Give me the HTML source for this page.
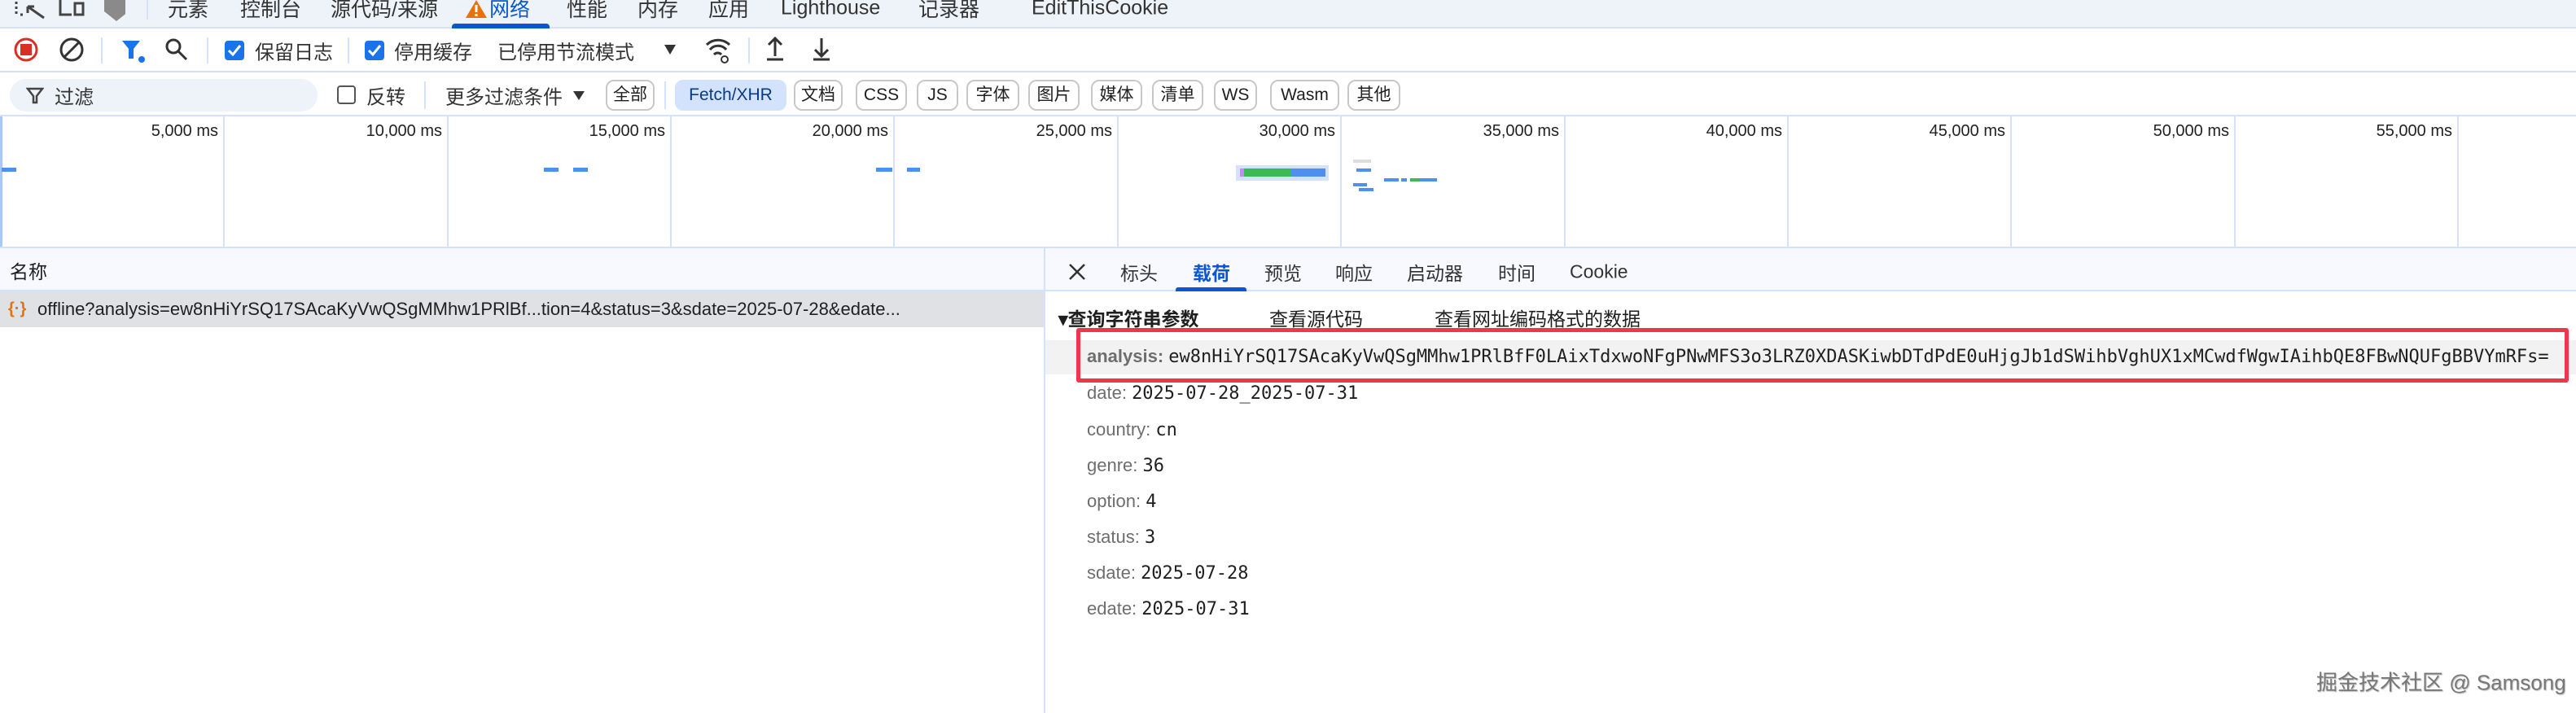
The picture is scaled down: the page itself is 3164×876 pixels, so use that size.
<!DOCTYPE html>
<html><head><meta charset="utf-8">
<style>
*{margin:0;padding:0;box-sizing:border-box}
body{width:3164px;height:876px;overflow:hidden;background:#fff;position:relative;font-family:"Liberation Sans","Noto Sans CJK SC",sans-serif;color:#1f1f1f;font-size:23px}
.a{position:absolute;white-space:nowrap}
.c{transform:translateY(-50%)}
.mono{font-family:"DejaVu Sans Mono","Liberation Mono","Noto Sans CJK SC",monospace}
.btn{position:absolute;top:98px;height:38px;border:2px solid #c8c8c8;border-radius:10px;font-size:21px;line-height:34px;text-align:center;color:#1f1f1f;background:#fff}
.vl{position:absolute;top:143px;height:162px;width:2px;background:#d6e2f7}
.tl{position:absolute;top:150px;font-size:20px;color:#222;text-align:right}
.bar{position:absolute;height:5px;background:#4f8ff0}
.k{color:#6e6e6e}
.row{position:absolute;left:1335px;font-size:22px}
</style></head><body>
<div class="a" style="left:0;top:0;width:3164px;height:35px;background:#eef2f9;border-bottom:2px solid #d3e3fd"></div>
<svg class="a" style="left:14px;top:0" width="140" height="26" viewBox="0 0 140 26">
<path d="M6 2v16M6 18h0M14 18h-4" stroke="#444" stroke-width="3" stroke-dasharray="3 3" fill="none"/>
<path d="M20 8l20 14M20 8v8M20 8h8" stroke="#444" stroke-width="3" fill="none"/>
<path d="M60 0v18h14" stroke="#444" stroke-width="3" fill="none"/><rect x="78" y="4" width="10" height="14" stroke="#444" stroke-width="3" fill="none"/>
<path d="M114 0h30v14l-15 12l-15-12z" fill="#8a8a8a"/>
</svg>
<div class="a" style="left:180px;top:0;width:2px;height:24px;background:#d3e3fd"></div>
<div class="a c" style="left:206px;top:10px;font-size:25px;color:#333">元素</div>
<div class="a c" style="left:295px;top:10px;font-size:25px;color:#333">控制台</div>
<div class="a c" style="left:406px;top:10px;font-size:25px;color:#333">源代码/来源</div>
<svg class="a" style="left:572px;top:0" width="26" height="22"><path d="M13 0L26 22H0z" fill="#e8710a"/><rect x="11.5" y="6" width="3" height="9" fill="#fff"/><rect x="11.5" y="17" width="3" height="3" fill="#fff"/></svg>
<div class="a c" style="left:601px;top:10px;font-size:25px;color:#0b57d0">网络</div>
<div class="a" style="left:555px;top:29px;width:120px;height:6px;background:#0b57d0;border-radius:4px 4px 0 0"></div>
<div class="a c" style="left:696px;top:10px;font-size:25px;color:#333">性能</div>
<div class="a c" style="left:783px;top:10px;font-size:25px;color:#333">内存</div>
<div class="a c" style="left:870px;top:10px;font-size:25px;color:#333">应用</div>
<div class="a c" style="left:959px;top:10px;font-size:25px;color:#333">Lighthouse</div>
<div class="a c" style="left:1128px;top:10px;font-size:25px;color:#333">记录器</div>
<div class="a c" style="left:1267px;top:10px;font-size:25px;color:#333">EditThisCookie</div>

<div class="a" style="left:0;top:87px;width:3164px;height:2px;background:#d3e3fd"></div>
<svg class="a" style="left:0;top:35px" width="1040" height="52">
<circle cx="32" cy="26" r="13" stroke="#d93025" stroke-width="3" fill="none"/><rect x="25" y="19" width="14" height="14" fill="#d93025"/>
<circle cx="88" cy="26" r="13" stroke="#333" stroke-width="3" fill="none"/><path d="M79 35L97 17" stroke="#333" stroke-width="3"/>
<rect x="124" y="11" width="2" height="32" fill="#d3e3fd"/>
<path d="M150 15h22l-8 10v12h-6V25z" fill="#1a73e8"/><circle cx="174" cy="38" r="4" fill="#1a73e8"/>
<circle cx="213" cy="22" r="8" stroke="#333" stroke-width="3" fill="none"/><path d="M219 28l10 10" stroke="#333" stroke-width="3"/>
<rect x="254" y="11" width="2" height="32" fill="#d3e3fd"/>
<rect x="276" y="15" width="24" height="24" rx="4" fill="#1a73e8"/><path d="M281 27l5 5l9-11" stroke="#fff" stroke-width="3" fill="none"/>
<rect x="427" y="11" width="2" height="32" fill="#d3e3fd"/>
<rect x="448" y="15" width="24" height="24" rx="4" fill="#1a73e8"/><path d="M453 27l5 5l9-11" stroke="#fff" stroke-width="3" fill="none"/>
<path d="M816 20h14l-7 12z" fill="#333"/>
<path d="M868 20a20 20 0 0 1 28 0M872 26a13 13 0 0 1 20 0M877 32a6 6 0 0 1 9 0" stroke="#333" stroke-width="3" fill="none"/><circle cx="890" cy="38" r="4" stroke="#333" stroke-width="2" fill="#fff"/>
<rect x="919" y="11" width="2" height="32" fill="#d3e3fd"/>
<path d="M952 12v22M944 20l8-8l8 8M942 38h20" stroke="#333" stroke-width="3" fill="none"/>
<path d="M1009 12v22M1001 26l8 8l8-8M999 38h20" stroke="#333" stroke-width="3" fill="none"/>
</svg>
<div class="a c" style="left:313px;top:62px;font-size:24px;color:#333">保留日志</div>
<div class="a c" style="left:484px;top:62px;font-size:24px;color:#333">停用缓存</div>
<div class="a c" style="left:611px;top:62px;font-size:24px;color:#333">已停用节流模式</div>

<div class="a" style="left:0;top:141px;width:3164px;height:2px;background:#d3e3fd"></div>
<div class="a" style="left:12px;top:97px;width:378px;height:40px;border-radius:20px;background:#eef2f9"></div>
<svg class="a" style="left:32px;top:106px" width="22" height="22"><path d="M2 3h18l-7 9v8h-4v-8z" stroke="#444" stroke-width="2.5" fill="none"/></svg>
<div class="a c" style="left:67px;top:117px;font-size:24px;color:#333">过滤</div>
<div class="a" style="left:414px;top:105px;width:23px;height:23px;border:2px solid #555;border-radius:4px"></div>
<div class="a c" style="left:450px;top:117px;font-size:24px;color:#333">反转</div>
<div class="a" style="left:521px;top:100px;width:2px;height:34px;background:#d3e3fd"></div>
<div class="a c" style="left:547px;top:117px;font-size:24px;color:#333">更多过滤条件</div>
<svg class="a" style="left:704px;top:110px" width="16" height="14"><path d="M0 2h14l-7 11z" fill="#333"/></svg>
<div class="btn" style="left:744px;width:60px">全部</div>
<div class="a" style="left:816px;top:100px;width:2px;height:34px;background:#d3e3fd"></div>
<div class="btn" style="left:829px;width:137px;background:#d3e3fd;border-color:#d3e3fd;color:#0b3a80">Fetch/XHR</div>
<div class="btn" style="left:975px;width:60px">文档</div>
<div class="btn" style="left:1051px;width:63px">CSS</div>
<div class="btn" style="left:1126px;width:51px">JS</div>
<div class="btn" style="left:1187px;width:65px">字体</div>
<div class="btn" style="left:1263px;width:63px">图片</div>
<div class="btn" style="left:1340px;width:63px">媒体</div>
<div class="btn" style="left:1415px;width:63px">清单</div>
<div class="btn" style="left:1491px;width:53px">WS</div>
<div class="btn" style="left:1560px;width:85px">Wasm</div>
<div class="btn" style="left:1655px;width:65px">其他</div>

<div class="a" style="left:0;top:143px;width:3px;height:162px;background:#a8c7fa"></div>
<div class="vl" style="left:274px"></div><div class="vl" style="left:549px"></div><div class="vl" style="left:823px"></div><div class="vl" style="left:1097px"></div><div class="vl" style="left:1372px"></div><div class="vl" style="left:1646px"></div><div class="vl" style="left:1921px"></div><div class="vl" style="left:2195px"></div><div class="vl" style="left:2469px"></div><div class="vl" style="left:2744px"></div><div class="vl" style="left:3018px"></div>
<div class="tl" style="left:120px;width:148px">5,000 ms</div>
<div class="tl" style="left:395px;width:148px">10,000 ms</div>
<div class="tl" style="left:669px;width:148px">15,000 ms</div>
<div class="tl" style="left:943px;width:148px">20,000 ms</div>
<div class="tl" style="left:1218px;width:148px">25,000 ms</div>
<div class="tl" style="left:1492px;width:148px">30,000 ms</div>
<div class="tl" style="left:1767px;width:148px">35,000 ms</div>
<div class="tl" style="left:2041px;width:148px">40,000 ms</div>
<div class="tl" style="left:2315px;width:148px">45,000 ms</div>
<div class="tl" style="left:2590px;width:148px">50,000 ms</div>
<div class="tl" style="left:2864px;width:148px">55,000 ms</div>
<div class="bar" style="left:2px;top:206px;width:18px"></div>
<div class="bar" style="left:668px;top:206px;width:18px"></div>
<div class="bar" style="left:704px;top:206px;width:18px"></div>
<div class="bar" style="left:1076px;top:206px;width:20px"></div>
<div class="bar" style="left:1114px;top:206px;width:16px"></div>
<div class="a" style="left:1518px;top:203px;width:114px;height:19px;background:#d3e3fd"></div>
<div class="a" style="left:1523px;top:207px;width:5px;height:10px;background:#c58af9"></div>
<div class="a" style="left:1528px;top:207px;width:58px;height:10px;background:#3cba54"></div>
<div class="a" style="left:1586px;top:207px;width:42px;height:10px;background:#4f8ff0"></div>
<div class="a" style="left:1662px;top:196px;width:22px;height:4px;background:#ddd"></div>
<div class="bar" style="left:1666px;top:207px;width:18px;height:4px"></div>
<div class="bar" style="left:1700px;top:219px;width:18px;height:4px"></div>
<div class="bar" style="left:1721px;top:219px;width:7px;height:4px"></div>
<div class="a" style="left:1732px;top:219px;width:11px;height:4px;background:#3cba54"></div>
<div class="bar" style="left:1743px;top:219px;width:22px;height:4px"></div>
<div class="bar" style="left:1662px;top:225px;width:17px;height:4px"></div>
<div class="bar" style="left:1669px;top:231px;width:18px;height:4px"></div>
<div class="a" style="left:0;top:303px;width:3164px;height:2px;background:#d3e3fd"></div>

<div class="a" style="left:0;top:305px;width:1284px;height:53px;background:#f8f9fe;border-bottom:2px solid #d3e3fd"></div>
<div class="a c" style="left:12px;top:332px;font-size:23px">名称</div>
<div class="a" style="left:0;top:358px;width:1284px;height:44px;background:#dfe1e5"></div>
<div class="a c" style="left:10px;top:380px;font-size:20px;color:#e8710a;font-weight:bold">{·}</div>
<div class="a c" style="left:46px;top:380px;font-size:22px;color:#1f1f1f">offline?analysis=ew8nHiYrSQ17SAcaKyVwQSgMMhw1PRlBf...tion=4&amp;status=3&amp;sdate=2025-07-28&amp;edate...</div>
<div class="a" style="left:1282px;top:305px;width:2px;height:571px;background:#d3e3fd"></div>

<div class="a" style="left:1284px;top:305px;width:1880px;height:53px;background:#f8f9fe;border-bottom:2px solid #d3e3fd"></div>
<svg class="a" style="left:1312px;top:323px" width="22" height="22"><path d="M2 2l18 18M20 2L2 20" stroke="#333" stroke-width="2.5"/></svg>
<div class="a c" style="left:1376px;top:334px;font-size:23px;color:#333">标头</div>
<div class="a c" style="left:1465px;top:334px;font-size:23px;color:#0b57d0;font-weight:bold">载荷</div>
<div class="a" style="left:1444px;top:353px;width:87px;height:5px;background:#0b57d0;border-radius:3px 3px 0 0"></div>
<div class="a c" style="left:1553px;top:334px;font-size:23px;color:#333">预览</div>
<div class="a c" style="left:1640px;top:334px;font-size:23px;color:#333">响应</div>
<div class="a c" style="left:1728px;top:334px;font-size:23px;color:#333">启动器</div>
<div class="a c" style="left:1840px;top:334px;font-size:23px;color:#333">时间</div>
<div class="a c" style="left:1928px;top:334px;font-size:23px;color:#333">Cookie</div>

<div class="a c" style="left:1300px;top:390px;font-size:23px;font-weight:bold">▾查询字符串参数</div>
<div class="a c" style="left:1559px;top:390px;font-size:23px">查看源代码</div>
<div class="a c" style="left:1762px;top:390px;font-size:23px">查看网址编码格式的数据</div>

<div class="a" style="left:1284px;top:418px;width:1880px;height:42px;background:#f2f2f2"></div>
<div class="a" style="left:1322px;top:403px;width:1833px;height:67px;border:5px solid #f0364a;border-radius:3px"></div>
<div class="row a c" style="top:438px"><span class="k" style="font-weight:bold">analysis:</span> <span class="mono" style="font-size:22px">ew8nHiYrSQ17SAcaKyVwQSgMMhw1PRlBfF0LAixTdxwoNFgPNwMFS3o3LRZ0XDASKiwbDTdPdE0uHjgJb1dSWihbVghUX1xMCwdfWgwIAihbQE8FBwNQUFgBBVYmRFs=</span></div>
<div class="row a c" style="top:483px"><span class="k">date:</span> <span class="mono">2025-07-28_2025-07-31</span></div>
<div class="row a c" style="top:528px"><span class="k">country:</span> <span class="mono">cn</span></div>
<div class="row a c" style="top:572px"><span class="k">genre:</span> <span class="mono">36</span></div>
<div class="row a c" style="top:616px"><span class="k">option:</span> <span class="mono">4</span></div>
<div class="row a c" style="top:660px"><span class="k">status:</span> <span class="mono">3</span></div>
<div class="row a c" style="top:704px"><span class="k">sdate:</span> <span class="mono">2025-07-28</span></div>
<div class="row a c" style="top:748px"><span class="k">edate:</span> <span class="mono">2025-07-31</span></div>

<div class="a c" style="left:2845px;top:837px;font-size:26px;color:#777;text-shadow:1px 1px 1px #bbb">掘金技术社区 @ Samsong</div>
</body></html>
